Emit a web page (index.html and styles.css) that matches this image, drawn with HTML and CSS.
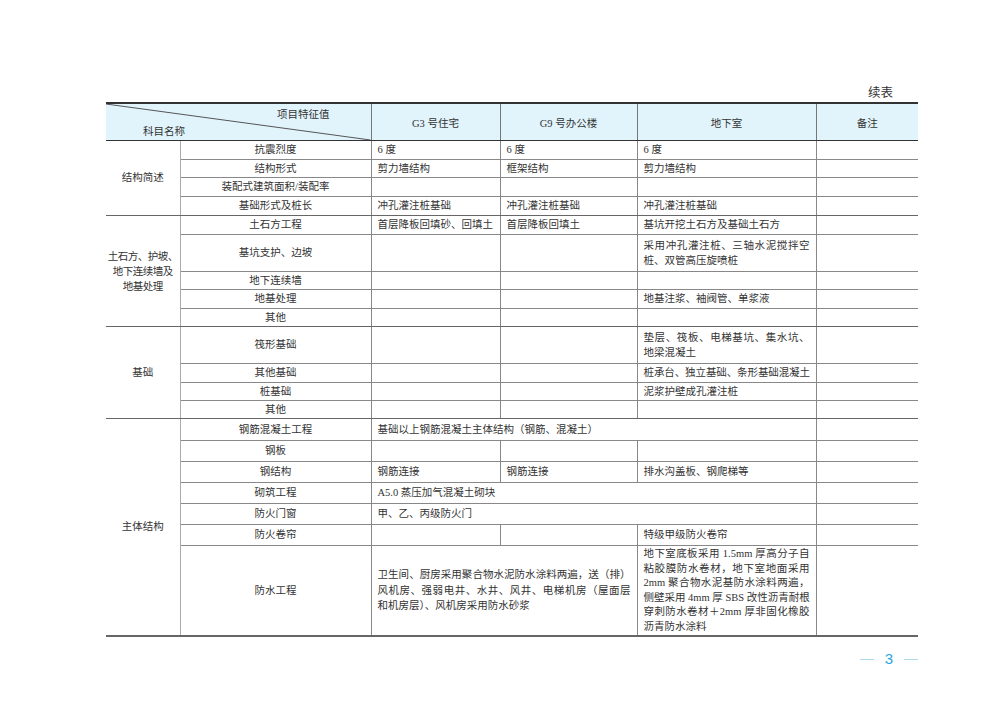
FILE: index.html
```html
<!DOCTYPE html>
<html lang="zh">
<head>
<meta charset="utf-8">
<title>续表</title>
<link rel="stylesheet" href="styles.css">
</head>
<body>
<div class="page">
  <div class="caption">续表</div>
  <table class="tbl">
    <colgroup>
      <col class="c1"><col class="c2"><col class="c3"><col class="c4"><col class="c5"><col class="c6">
    </colgroup>
    <thead>
      <tr class="hrow">
        <th colspan="2" class="diag">
          <svg class="diag-line" viewBox="0 0 100 100" preserveAspectRatio="none"><line x1="0" y1="0" x2="100" y2="100" stroke="#555" stroke-width="1" vector-effect="non-scaling-stroke"/></svg>
          <div class="diag-labels">
            <span class="lbl-top">项目特征值</span>
            <span class="lbl-bot">科目名称</span>
          </div>
        </th>
        <th>G3 号住宅</th>
        <th>G9 号办公楼</th>
        <th>地下室</th>
        <th>备注</th>
      </tr>
    </thead>
    <tbody>
      <tr class="r19"><td rowspan="4" class="grp">结构简述</td><td class="item">抗震烈度</td><td>6 度</td><td>6 度</td><td>6 度</td><td></td></tr>
      <tr class="r18"><td class="item">结构形式</td><td>剪力墙结构</td><td>框架结构</td><td>剪力墙结构</td><td></td></tr>
      <tr class="r19"><td class="item">装配式建筑面积/装配率</td><td></td><td></td><td></td><td></td></tr>
      <tr class="r19 gend"><td class="item">基础形式及桩长</td><td>冲孔灌注桩基础</td><td>冲孔灌注桩基础</td><td>冲孔灌注桩基础</td><td></td></tr>

      <tr class="r19"><td rowspan="5" class="grp tight">土石方、护坡、<br>地下连续墙及<br>地基处理</td><td class="item">土石方工程</td><td>首层降板回填砂、回填土</td><td>首层降板回填土</td><td>基坑开挖土石方及基础土石方</td><td></td></tr>
      <tr class="r37"><td class="item">基坑支护、边坡</td><td></td><td></td><td class="lines"><span class="jl">采用冲孔灌注桩、三轴水泥搅拌空</span><span class="ll">桩、双管高压旋喷桩</span></td><td></td></tr>
      <tr class="r18"><td class="item">地下连续墙</td><td></td><td></td><td></td><td></td></tr>
      <tr class="r19"><td class="item">地基处理</td><td></td><td></td><td>地基注浆、袖阀管、单浆液</td><td></td></tr>
      <tr class="r18 gend"><td class="item">其他</td><td></td><td></td><td></td><td></td></tr>

      <tr class="r37"><td rowspan="4" class="grp">基础</td><td class="item">筏形基础</td><td></td><td></td><td class="lines"><span class="jl">垫层、筏板、电梯基坑、集水坑、</span><span class="ll">地梁混凝土</span></td><td></td></tr>
      <tr class="r19"><td class="item">其他基础</td><td></td><td></td><td class="nw">桩承台、独立基础、条形基础混凝土</td><td></td></tr>
      <tr class="r18"><td class="item">桩基础</td><td></td><td></td><td>泥浆护壁成孔灌注桩</td><td></td></tr>
      <tr class="r18 gend"><td class="item">其他</td><td></td><td></td><td></td><td></td></tr>

      <tr class="r22"><td rowspan="7" class="grp">主体结构</td><td class="item">钢筋混凝土工程</td><td colspan="3">基础以上钢筋混凝土主体结构（钢筋、混凝土）</td><td></td></tr>
      <tr class="r21"><td class="item">钢板</td><td></td><td></td><td></td><td></td></tr>
      <tr class="r21"><td class="item">钢结构</td><td>钢筋连接</td><td>钢筋连接</td><td>排水沟盖板、钢爬梯等</td><td></td></tr>
      <tr class="r21"><td class="item">砌筑工程</td><td colspan="3">A5.0 蒸压加气混凝土砌块</td><td></td></tr>
      <tr class="r21"><td class="item">防火门窗</td><td colspan="3">甲、乙、丙级防火门</td><td></td></tr>
      <tr class="r21"><td class="item">防火卷帘</td><td></td><td></td><td>特级甲级防火卷帘</td><td></td></tr>
      <tr class="r89"><td class="item">防水工程</td><td colspan="2" class="lines mid"><span class="jl">卫生间、厨房采用聚合物水泥防水涂料两遍，送（排）</span><span class="jl">风机房、强弱电井、水井、风井、电梯机房（屋面层</span><span class="ll">和机房层）、风机房采用防水砂浆</span></td><td class="lines dense"><span class="jl">地下室底板采用 1.5mm 厚高分子自</span><span class="jl">粘胶膜防水卷材，地下室地面采用</span><span class="jl">2mm 聚合物水泥基防水涂料两遍，</span><span class="jl">侧壁采用 4mm 厚 SBS 改性沥青耐根</span><span class="jl">穿刺防水卷材＋2mm 厚非固化橡胶</span><span class="ll">沥青防水涂料</span></td><td></td></tr>
    </tbody>
  </table>
  <div class="pagenum"><span class="dash"></span><span class="num">3</span><span class="dash"></span></div>
</div>
</body>
</html>
```

FILE: styles.css
```css
html, body {
  margin: 0;
  background: #ffffff;
}
body {
  font-family: "Liberation Serif", "Noto Sans CJK SC", serif;
  color: #333333;
}
.page {
  padding: 84px 88px 0 106px;
  width: 812px;
}
.caption {
  text-align: right;
  padding-right: 25px;
  font-size: 12.5px;
  height: 18px;
  line-height: 18px;
  color: #333;
}
.tbl {
  border-collapse: collapse;
  table-layout: fixed;
  width: 812px;
  font-size: 10.5px;
  border-top: 2px solid #333;
  border-bottom: 2px solid #666;
}
.c1 { width: 74px; }
.c2 { width: 191px; }
.c3 { width: 129px; }
.c4 { width: 137px; }
.c5 { width: 179px; }
.c6 { width: 102px; }

.tbl th {
  background: #e1f4fc;
  font-weight: normal;
  text-align: center;
  vertical-align: middle;
  border-left: 1px solid #777;
  border-bottom: 1px solid #333;
  padding: 0;
}
.hrow { height: 36px; }
.tbl th.diag {
  position: relative;
  border-left: none;
  padding: 0;
}
.diag-line {
  position: absolute;
  left: 0;
  top: 0;
  width: 100%;
  height: 100%;
}
.diag-labels {
  display: flex;
  flex-direction: column;
  height: 36px;
}
.lbl-top {
  align-self: flex-end;
  padding: 4px 41px 0 0;
  line-height: 14px;
}
.lbl-bot {
  align-self: flex-start;
  padding: 3px 0 0 37px;
  line-height: 14px;
}

.tbl td {
  border: 1px solid #888;
  border-right: none;
  padding: 0 6px;
  vertical-align: middle;
  text-align: left;
  line-height: 14px;
}
.tbl td:first-child { border-left: none; }
.tbl td.grp {
  text-align: center;
  padding: 0;
  border-left: none;
  border-right: 1px solid #aaa;
  border-bottom: 1px solid #666;
}
.tbl td.tight {
  letter-spacing: -0.5px;
  white-space: nowrap;
  line-height: 15px;
}
.tbl td.item {
  text-align: center;
  border-left: 1px solid #aaa;
}
.tbl tr.gend td { border-bottom: 1px solid #666; }
.tbl td.nw {
  white-space: nowrap;
  padding-right: 0;
  letter-spacing: -0.1px;
}
.tbl td.lines { line-height: 15px; }
.tbl td.mid { line-height: 15.5px; }
.tbl td.dense {
  line-height: 14.5px;
  padding-top: 1px;
  padding-bottom: 1px;
}
.jl {
  display: block;
  white-space: nowrap;
  text-align: justify;
  text-align-last: justify;
}
.ll {
  display: block;
  white-space: nowrap;
  text-align: left;
}

.r18 { height: 18px; }
.r19 { height: 19px; }
.r21 { height: 21px; }
.r22 { height: 22px; }
.r37 { height: 37px; }
.r89 { height: 89px; }

.pagenum {
  display: flex;
  justify-content: flex-end;
  align-items: center;
  gap: 11px;
  margin-top: 14px;
}
.dash {
  width: 14px;
  height: 1px;
  background: #a9dcf2;
}
.num {
  font-family: "Liberation Sans", sans-serif;
  font-size: 15px;
  color: #2aa6e0;
  line-height: 16px;
}
```
